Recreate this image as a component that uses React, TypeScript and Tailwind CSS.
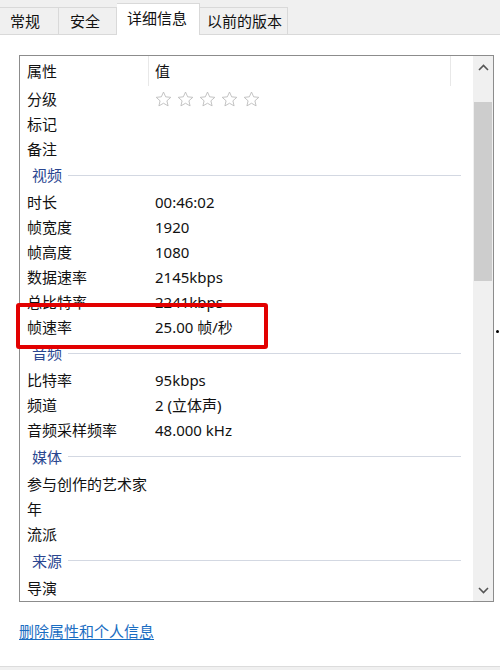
import React from "react";

const FONT = { fontFamily: '"Noto Sans", "Noto Sans CJK SC", sans-serif' };

function Star() {
  return (
    <svg width="17" height="16" viewBox="0 0 24 23" className="shrink-0">
      <path
        d="M12 1.5l3.1 6.9 7.4.7-5.6 5 1.7 7.3L12 17.6l-6.6 3.8 1.7-7.3-5.6-5 7.4-.7z"
        fill="none"
        stroke="#bdbdbd"
        strokeWidth="1.3"
        strokeLinejoin="round"
      />
    </svg>
  );
}

function Row({ name, value }: { name: string; value?: React.ReactNode }) {
  return (
    <div className="flex h-[25px] items-center text-[15px] leading-[20px] text-[#111]">
      <div className="w-[129px] shrink-0 pl-[7px] whitespace-nowrap">{name}</div>
      <div className="pl-[6px] whitespace-nowrap">{value}</div>
    </div>
  );
}

function Group({ title, h = "h-[28px]" }: { title: string; h?: string }) {
  return (
    <div className={`flex ${h} items-center pl-[12px] pr-[12px]`}>
      <span className="text-[15px] leading-[20px] text-[#2a4690]">{title}</span>
      <div className="ml-[6px] h-px flex-1 bg-[#d3d8e2]" />
    </div>
  );
}

function Chevron({ up }: { up?: boolean }) {
  return (
    <svg width="11" height="7" viewBox="0 0 11 7">
      <path
        d={up ? "M1 6L5.5 1.5L10 6" : "M1 1L5.5 5.5L10 1"}
        fill="none"
        stroke="#555"
        strokeWidth="1.6"
      />
    </svg>
  );
}

export default function App() {
  return (
    <div className="relative flex h-[670px] w-[500px] flex-col overflow-hidden bg-white" style={FONT}>
      {/* Tab strip */}
      <div className="flex h-[35px] shrink-0 items-end border-b border-[#d9d9d9] bg-[#f0f0f0]">
        <div className="flex h-[27px] w-[59px] items-center border-r border-t border-[#d9d9d9] pl-[10px] text-[15px] leading-[20px] text-[#111]">
          常规
        </div>
        <div className="flex h-[27px] w-[58px] items-center border-r border-t border-[#d9d9d9] pl-[11px] text-[15px] leading-[20px] text-[#111]">
          安全
        </div>
        <div className="-mb-px flex h-[32px] w-[83px] items-start border-r border-t border-[#d9d9d9] bg-white pl-[10px] pt-[4px] text-[15px] leading-[20px] text-[#111]">
          详细信息
        </div>
        <div className="flex h-[27px] w-[88px] items-center border-r border-t border-[#d9d9d9] pl-[7px] text-[15px] leading-[20px] text-[#111]">
          以前的版本
        </div>
      </div>

      {/* List box */}
      <div className="ml-[19px] mt-[20px] flex h-[547px] w-[475px] shrink-0 border border-[#8c8c8c]">
        <div className="flex-1 overflow-hidden">
          <div className="flex h-[30px] items-center text-[15px] leading-[20px] text-[#111]">
            <div className="flex h-full w-[129px] shrink-0 items-center border-r border-[#e8e8e8] pl-[7px]">属性</div>
            <div className="flex h-full w-[302px] shrink-0 items-center border-r border-[#e8e8e8] pl-[6px]">值</div>
          </div>
          <Row
            name="分级"
            value={
              <div className="flex items-center gap-[5px]">
                <Star />
                <Star />
                <Star />
                <Star />
                <Star />
              </div>
            }
          />
          <Row name="标记" />
          <Row name="备注" />
          <Group title="视频" />
          <Row name="时长" value="00:46:02" />
          <Row name="帧宽度" value="1920" />
          <Row name="帧高度" value="1080" />
          <Row name="数据速率" value="2145kbps" />
          <Row name="总比特率" value="2241kbps" />
          <Row name="帧速率" value="25.00 帧/秒" />
          <Group title="音频" />
          <Row name="比特率" value="95kbps" />
          <Row name="频道" value="2 (立体声)" />
          <Row name="音频采样频率" value="48.000 kHz" />
          <Group title="媒体" h="h-[29px]" />
          <Row name="参与创作的艺术家" />
          <Row name="年" />
          <Row name="流派" />
          <Group title="来源" h="h-[29px]" />
          <Row name="导演" />
        </div>
        {/* Scrollbar */}
        <div className="flex w-[20px] shrink-0 flex-col bg-[#f0f0f0]">
          <div className="flex h-[22px] items-center justify-center">
            <Chevron up />
          </div>
          <div className="h-[24px]" />
          <div className="mx-px h-[179px] bg-[#cdcdcd]" />
          <div className="flex-1" />
          <div className="flex h-[22px] items-center justify-center">
            <Chevron />
          </div>
        </div>
      </div>

      {/* Link */}
      <div className="ml-[19px] mt-[19px] text-[15px] leading-[20px]">
        <span className="cursor-pointer text-[#1a6dc2] underline underline-offset-2">删除属性和个人信息</span>
      </div>

      <div className="flex-1" />
      <div className="h-[4px] shrink-0 border-t border-[#dcdcdc] bg-[#f0f0f0]" />

      {/* Red annotation box */}
      <div className="absolute left-[16px] top-[303px] h-[46px] w-[252px] rounded-[3px] border-[4px] border-[#e20000]" />
      {/* stray dot */}
      <div className="absolute left-[496px] top-[330px] h-[3px] w-[3px] rounded-full bg-black" />
    </div>
  );
}
